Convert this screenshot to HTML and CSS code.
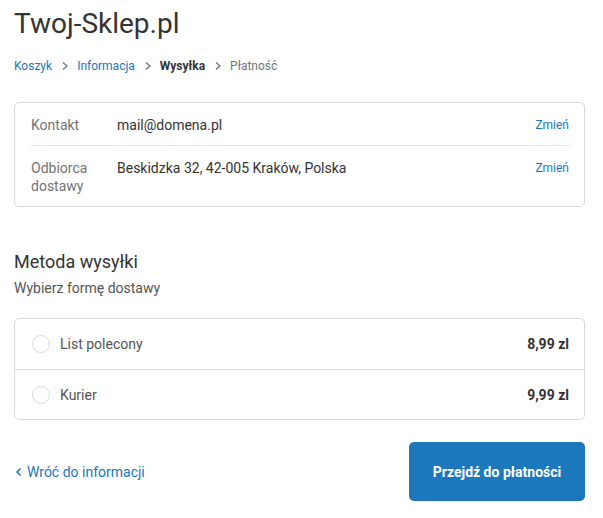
FILE: index.html
```html
<!DOCTYPE html>
<html lang="pl">
<head>
<meta charset="utf-8">
<link rel="stylesheet" href="styles.css">
</head>
<body>
<main class="page">
  <h1 class="logo">Twoj-Sklep.pl</h1>
  <nav class="crumbs">
    <a class="crumb link">Koszyk</a>
    <svg class="chev" viewBox="0 0 10 10"><path d="M3 1.5 L7 5 L3 8.5" /></svg>
    <a class="crumb link">Informacja</a>
    <svg class="chev" viewBox="0 0 10 10"><path d="M3 1.5 L7 5 L3 8.5" /></svg>
    <span class="crumb current">Wysyłka</span>
    <svg class="chev" viewBox="0 0 10 10"><path d="M3 1.5 L7 5 L3 8.5" /></svg>
    <span class="crumb muted">Płatność</span>
  </nav>

  <section class="card review">
    <div class="review-row">
      <div class="review-label">Kontakt</div>
      <div class="review-value">mail@domena.pl</div>
      <a class="change">Zmień</a>
    </div>
    <div class="review-row">
      <div class="review-label">Odbiorca dostawy</div>
      <div class="review-value">Beskidzka 32, 42-005 Kraków, Polska</div>
      <a class="change">Zmień</a>
    </div>
  </section>

  <h2 class="section-title">Metoda wysyłki</h2>
  <p class="section-sub">Wybierz formę dostawy</p>

  <section class="card options">
    <label class="option">
      <span class="radio"></span>
      <span class="option-name">List polecony</span>
      <span class="option-price">8,99 zl</span>
    </label>
    <label class="option">
      <span class="radio"></span>
      <span class="option-name">Kurier</span>
      <span class="option-price">9,99 zl</span>
    </label>
  </section>

  <div class="actions">
    <a class="back">
      <svg class="back-chev" viewBox="0 0 10 10"><path d="M6.5 1.5 L3 5 L6.5 8.5" /></svg>
      Wróć do informacji
    </a>
    <button class="primary">Przejdź do płatności</button>
  </div>
</main>
</body>
</html>
```

FILE: styles.css
```css
* { box-sizing: border-box; }
html, body { margin: 0; padding: 0; background: #fff; }
body {
  font-family: Roboto, "Liberation Sans", Arial, sans-serif;
  color: #333;
  font-size: 14px;
}
.page {
  width: 571px;
  margin-left: 14px;
  padding-top: 6px;
}
.logo {
  margin: 0;
  font-size: 28px;
  font-weight: 400;
  line-height: 36px;
  color: #333;
}
.crumbs {
  display: flex;
  align-items: center;
  margin-top: 15px;
  height: 18px;
  font-size: 12px;
}
.crumb { line-height: 18px; }
.link { color: #1b76bb; }
.current { color: #333; font-weight: 700; }
.muted { color: #737373; }
.chev {
  width: 10px;
  height: 10px;
  margin: 0 7px 0 8px;
  fill: none;
  stroke: #737373;
  stroke-width: 1.3;
}
.card {
  border: 1px solid #d9d9d9;
  border-radius: 5px;
}
.review {
  margin-top: 27px;
  padding: 0 15px 0 16px;
}
.review-row {
  display: flex;
  align-items: flex-start;
  padding: 13px 0 11px;
  line-height: 18px;
}
.review-row + .review-row {
  border-top: 1px solid #e3e3e3;
}
.review-label {
  width: 86px;
  flex: none;
  color: #737373;
  padding-right: 10px;
}
.review-value {
  flex: 1;
  color: #333;
}
.change {
  font-size: 12px;
  color: #1b76bb;
}
.section-title {
  margin: 43px 0 0;
  font-size: 18px;
  font-weight: 400;
  line-height: 24px;
  color: #333;
}
.section-sub {
  margin: 5px 0 0;
  line-height: 18px;
  color: #545454;
}
.options {
  margin-top: 21px;
}
.option {
  display: flex;
  align-items: center;
  height: 50px;
  padding: 0 15px 0 17px;
}
.option + .option {
  border-top: 1px solid #d9d9d9;
}
.radio {
  width: 18px;
  height: 18px;
  border: 1px solid #d9d9d9;
  border-radius: 50%;
  flex: none;
  margin-right: 10px;
}
.option-name {
  flex: 1;
  color: #545454;
}
.option-price {
  font-weight: 700;
  color: #333;
}
.actions {
  display: flex;
  align-items: center;
  justify-content: space-between;
  margin-top: 22px;
}
.back {
  display: flex;
  align-items: center;
  color: #1b76bb;
  line-height: 18px;
}
.back-chev {
  width: 10px;
  height: 10px;
  margin-right: 3px;
  fill: none;
  stroke: #1b76bb;
  stroke-width: 1.5;
}
.primary {
  width: 176px;
  height: 59px;
  border: none;
  border-radius: 5px;
  background: #1b78bd;
  color: #fff;
  font-family: Roboto, "Liberation Sans", Arial, sans-serif;
  font-size: 14px;
  font-weight: 700;
}
```
